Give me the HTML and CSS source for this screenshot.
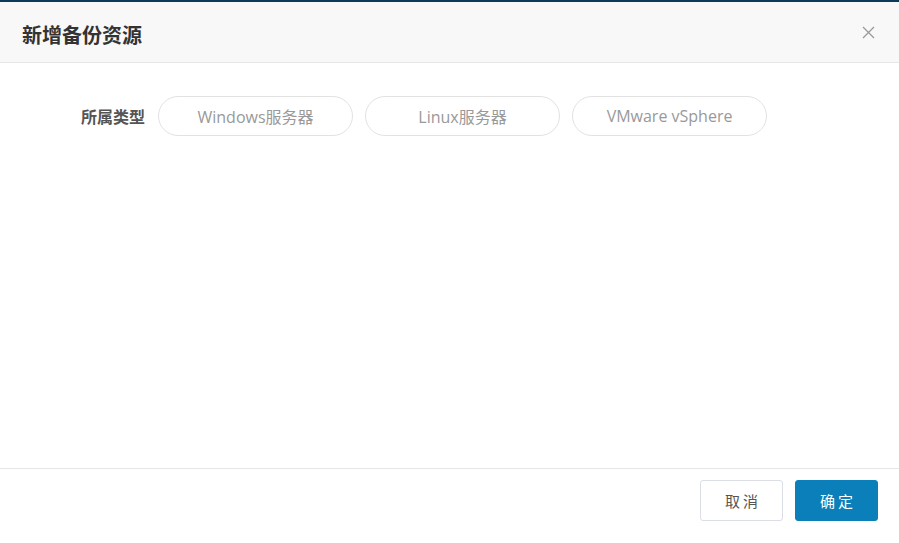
FILE: index.html
```html
<!DOCTYPE html>
<html lang="zh">
<head>
<meta charset="utf-8">
<link rel="stylesheet" href="styles.css">
</head>
<body>
<div class="dialog">
  <div class="header">
    <h2 class="title">新增备份资源</h2>
    <span class="close" aria-label="close">
      <svg width="13" height="13" viewBox="0 0 13 13"><path d="M1 1L12 12M12 1L1 12" stroke="#999" stroke-width="1.3" fill="none"/></svg>
    </span>
  </div>
  <div class="content">
    <div class="row">
      <span class="label">所属类型</span>
      <div class="options">
        <button class="pill">Windows服务器</button>
        <button class="pill">Linux服务器</button>
        <button class="pill">VMware vSphere</button>
      </div>
    </div>
  </div>
  <div class="footer">
    <button class="btn btn-cancel">取消</button>
    <button class="btn btn-ok">确定</button>
  </div>
</div>
</body>
</html>
```
FILE: styles.css
```css
html, body {
  margin: 0;
  padding: 0;
  background: #fff;
}
body {
  font-family: "Open Sans", "Noto Sans CJK SC", sans-serif;
}
.dialog {
  width: 899px;
  height: 543px;
  display: flex;
  flex-direction: column;
  box-sizing: border-box;
  border-top: 2px solid #0d3a57;
}
.header {
  height: 60px;
  background: #f8f8f8;
  border-bottom: 1px solid #e6e6e6;
  display: flex;
  align-items: center;
  justify-content: space-between;
  padding: 0 24px 0 22px;
  box-sizing: content-box;
}
.title {
  margin: 4px 0 0;
  font-family: "Noto Sans CJK SC", sans-serif;
  font-size: 20px;
  font-weight: 700;
  color: #333;
}
.close {
  display: flex;
  margin-top: 0;
}
.content {
  flex: 1;
  padding: 33px 0 0 81px;
}
.row {
  display: flex;
  align-items: center;
  gap: 13px;
}
.label {
  font-family: "Noto Sans CJK SC", sans-serif;
  font-size: 16px;
  font-weight: 700;
  color: #555;
}
.options {
  display: flex;
  gap: 12px;
}
.pill {
  width: 195px;
  height: 40px;
  border: 1px solid #e2e2e2;
  border-radius: 20px;
  background: #fff;
  font-family: "Open Sans", "Noto Sans CJK SC", sans-serif;
  font-size: 16px;
  color: #999;
  padding: 0;
}
.footer {
  height: 75px;
  border-top: 1px solid #e6e6e6;
  display: flex;
  justify-content: flex-end;
  align-items: flex-start;
  gap: 12px;
  padding: 11px 21px 0 0;
  box-sizing: border-box;
}
.btn {
  width: 83px;
  height: 41px;
  border-radius: 3px;
  font-family: "Noto Sans CJK SC", sans-serif;
  font-size: 15px;
  letter-spacing: 3px;
  padding: 0 0 0 3px;
}
.btn-cancel {
  background: #fff;
  border: 1px solid #dcdee6;
  color: #555;
}
.btn-ok {
  background: #0a7fb9;
  border: 1px solid #0a7fb9;
  color: #fff;
}
```
